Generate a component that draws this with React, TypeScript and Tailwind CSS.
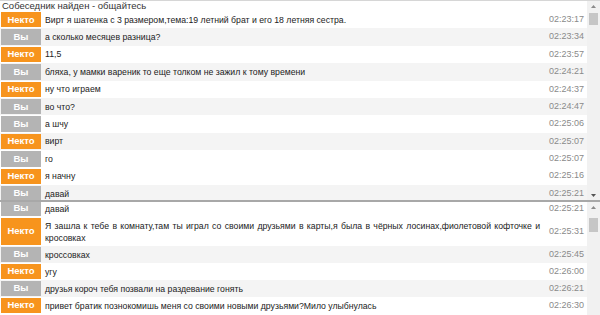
import React from "react";

type Msg = { who: "n" | "v"; text: string; time: string; gray?: boolean; tall?: boolean };

const top: Msg[] = [
  { who: "n", text: "Вирт я шатенка с 3 размером,тема:19 летний брат и его 18 летняя сестра.", time: "02:23:17" },
  { who: "v", text: "а сколько месяцев разница?", time: "02:23:34", gray: true },
  { who: "n", text: "11,5", time: "02:23:57" },
  { who: "v", text: "бляха, у мамки вареник то еще толком не зажил к тому времени", time: "02:24:21", gray: true },
  { who: "n", text: "ну что играем", time: "02:24:37" },
  { who: "v", text: "во что?", time: "02:24:47", gray: true },
  { who: "v", text: "а шчу", time: "02:25:06" },
  { who: "n", text: "вирт", time: "02:25:07", gray: true },
  { who: "v", text: "го", time: "02:25:07" },
  { who: "n", text: "я начну", time: "02:25:16" },
  { who: "v", text: "давай", time: "02:25:21", gray: true },
];

const bottom: Msg[] = [
  { who: "v", text: "давай", time: "02:25:21" },
  {
    who: "n",
    text: "Я зашла к тебе в комнату,там ты играл со своими друзьями в карты,я была в чёрных лосинах,фиолетовой кофточке и кросовках",
    time: "02:25:31",
    tall: true,
  },
  { who: "v", text: "кроссовках", time: "02:25:45", gray: true },
  { who: "n", text: "угу", time: "02:26:00" },
  { who: "v", text: "друзья короч тебя позвали на раздевание гонять", time: "02:26:21", gray: true },
  { who: "n", text: "привет братик познокомишь меня со своими новыми друзьями?Мило улыбнулась", time: "02:26:30" },
];

function Row({ m, big }: { m: Msg; big?: boolean }) {
  const h = m.tall ? "h-[29px]" : big ? "h-[17.4px]" : "h-[17px]";
  return (
    <div className={`flex items-stretch shrink-0 ${m.gray ? "bg-[#f4f4f4]" : "bg-white"} ${h}`}>
      <div
        className={`ml-[1px] my-[1px] w-[40px] shrink-0 flex items-center justify-center text-white font-bold text-[9.5px] ${
          m.who === "n" ? "bg-[#f7941d]" : "bg-[#b4b4b4]"
        }`}
      >
        {m.who === "n" ? "Некто" : "Вы"}
      </div>
      <div className="flex-1 flex items-center pl-[4px] pr-[5px]">
        <div className="w-full text-justify text-[8.7px] leading-[12px] text-[#222]">{m.text}</div>
      </div>
      <div className="w-[42px] shrink-0 flex items-center justify-end pr-[3px] text-[9px] text-[#8a8a8a]">{m.time}</div>
    </div>
  );
}

function Scrollbar({ thumbTop, thumbH, down }: { thumbTop: number; thumbH: number; down: boolean }) {
  return (
    <div className="w-[13px] shrink-0 bg-[#f1f1f1] flex flex-col items-center pr-[1px]">
      <div className="h-[10px] shrink-0 flex items-center justify-center">
        <svg width="5" height="3" viewBox="0 0 5 3">
          <path d="M0 3 L2.5 0 L5 3 Z" fill="#8a8a8a" />
        </svg>
      </div>
      <div className="w-[9px] shrink-0 bg-[#c6c6c6]" style={{ marginTop: thumbTop, height: thumbH }} />
      <div className="flex-1" />
      {down && (
        <div className="h-[10px] shrink-0 flex items-center justify-center">
          <svg width="5" height="3" viewBox="0 0 5 3">
            <path d="M0 0 L2.5 3 L5 0 Z" fill="#555" />
          </svg>
        </div>
      )}
    </div>
  );
}

export default function App() {
  return (
    <div className="w-[600px] h-[315px] overflow-hidden bg-white flex flex-col" style={{ fontFamily: '"Liberation Sans", Arial, sans-serif' }}>
      <div className="h-[200px] shrink-0 flex border-t border-[#d6d6d6]">
        <div className="flex-1 flex flex-col overflow-hidden">
          <div className="h-[10px] shrink-0 pl-[2px] text-[9.5px] leading-[10px] text-[#333]">Собеседник найден - общайтесь</div>
          {top.map((m, i) => (
            <Row key={i} m={m} big />
          ))}
        </div>
        <Scrollbar thumbTop={2} thumbH={12} down />
      </div>
      <div className="h-[2px] shrink-0 bg-[#a8a8a8]" />
      <div className="flex-1 flex min-h-0">
        <div className="flex-1 overflow-hidden">
          <div className="flex flex-col -mt-[2px]">
            {bottom.map((m, i) => (
              <Row key={i} m={m} />
            ))}
          </div>
        </div>
        <Scrollbar thumbTop={6} thumbH={14} down={false} />
      </div>
    </div>
  );
}
